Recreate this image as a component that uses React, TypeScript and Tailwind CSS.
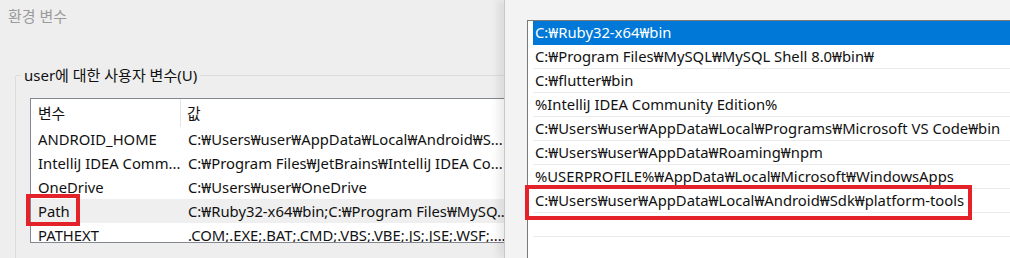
import React from "react"

const font = { fontFamily: '"Noto Sans", "Noto Sans CJK KR", sans-serif' }

const userVars = [
  { name: "ANDROID_HOME", value: "C:₩Users₩user₩AppData₩Local₩Android₩S..." },
  { name: "IntelliJ IDEA Comm...", value: "C:₩Program Files₩JetBrains₩IntelliJ IDEA Co..." },
  { name: "OneDrive", value: "C:₩Users₩user₩OneDrive" },
  { name: "Path", value: "C:₩Ruby32-x64₩bin;C:₩Program Files₩MySQ...", hover: true },
  { name: "PATHEXT", value: ".COM;.EXE;.BAT;.CMD;.VBS;.VBE;.JS;.JSE;.WSF;...." },
]

const paths = [
  "C:₩Ruby32-x64₩bin",
  "C:₩Program Files₩MySQL₩MySQL Shell 8.0₩bin₩",
  "C:₩flutter₩bin",
  "%IntelliJ IDEA Community Edition%",
  "C:₩Users₩user₩AppData₩Local₩Programs₩Microsoft VS Code₩bin",
  "C:₩Users₩user₩AppData₩Roaming₩npm",
  "%USERPROFILE%₩AppData₩Local₩Microsoft₩WindowsApps",
  "C:₩Users₩user₩AppData₩Local₩Android₩Sdk₩platform-tools",
  "",
  "",
]

function EnvWindow() {
  return (
    <div className="relative w-[504px] h-full shrink-0 bg-[#eeeeee] overflow-hidden">
      <div className="h-[32px] pl-[8px] flex items-center text-[15px] text-[#9a9a9a]">환경 변수</div>
      <fieldset className="mt-[33px] ml-[15px] w-[620px] h-[200px] border border-[#dcdcdc] rounded-[2px]">
        <legend className="ml-[5px] px-[3px] text-[15px] leading-[20px] text-[#111]">
          user에 대한 사용자 변수(U)
        </legend>
        <div className="ml-[14px] mt-[13px] w-[520px] h-[145px] border border-[#828790] bg-white overflow-hidden text-[14.8px] text-[#111]">
          <div className="h-[28px] flex items-center">
            <div className="w-[150px] h-full pl-[7px] flex items-center border-r border-[#e5e5e5]">변수</div>
            <div className="pl-[6px]">값</div>
          </div>
          {userVars.map((v) => (
            <div
              key={v.name}
              className={`h-[24px] flex items-center whitespace-nowrap ${v.hover ? "bg-[#efefef]" : ""}`}
            >
              <div className="w-[150px] pl-[7px]">{v.name}</div>
              <div className="pl-[7px]">{v.value}</div>
            </div>
          ))}
        </div>
      </fieldset>
      {/* highlight around "Path" */}
      <div className="absolute left-[26px] top-[194px] w-[54px] h-[32px] border-[4px] border-[#e3222a]" />
    </div>
  )
}

function EditWindow() {
  return (
    <div className="relative flex-1 h-full bg-[#f3f3f3] border-l border-[#c9c9c9] pt-[20px] pl-[22px] shadow-[-6px_0_8px_rgba(0,0,0,0.08)] z-10">
      <div className="h-[260px] border-t border-l border-[#7a7a7a] bg-white pl-[5px] text-[14.8px] text-[#111]">
        {paths.map((p, i) => (
          <div
            key={i}
            className={`h-[24px] pl-[2px] flex items-center whitespace-nowrap border-b ${
              i === 0 ? "bg-[#0078d7] text-white border-[#0078d7]" : "border-[#ebebeb]"
            }`}
          >
            {p}
          </div>
        ))}
      </div>
      {/* highlight around platform-tools */}
      <div className="absolute left-[20px] top-[185px] w-[447px] h-[35px] border-[4px] border-[#e3222a]" />
    </div>
  )
}

export default function App() {
  return (
    <div className="w-[1010px] h-[258px] flex overflow-hidden" style={font}>
      <EnvWindow />
      <EditWindow />
    </div>
  )
}
